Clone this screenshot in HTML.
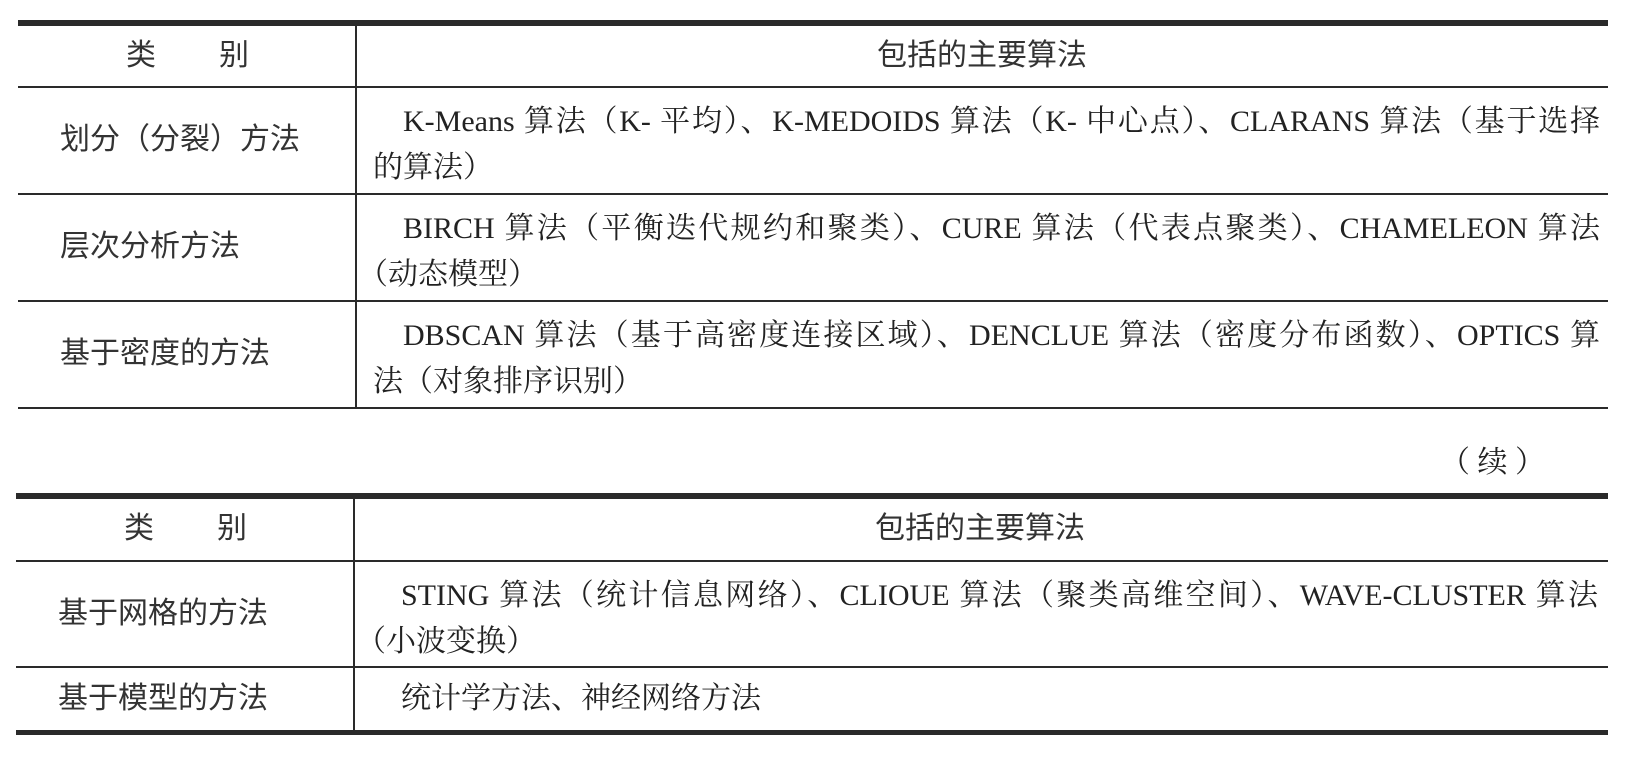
<!DOCTYPE html>
<html><head><meta charset="utf-8"><style>
body{margin:0;width:1631px;height:764px;background:#fff;position:relative;overflow:hidden;color:#222}
.h{position:absolute;background:#2a2a2a}
.t{position:absolute;font-size:30px;line-height:42px;white-space:nowrap}
.s{font-family:"Liberation Sans","Noto Sans CJK SC",sans-serif;color:#333}
.r{font-family:"Liberation Serif","Noto Serif CJK SC",serif}
.j{text-align:justify;text-align-last:justify;white-space:normal;width:1227px}
</style></head><body>
<!-- table 1 -->
<div class="h" style="left:18px;top:20px;width:1590px;height:6px"></div>
<div class="h" style="left:18px;top:86px;width:1590px;height:2px"></div>
<div class="h" style="left:18px;top:193px;width:1590px;height:2px"></div>
<div class="h" style="left:18px;top:300px;width:1590px;height:2px"></div>
<div class="h" style="left:18px;top:407px;width:1590px;height:2px"></div>
<div class="h" style="left:355px;top:20px;width:2px;height:389px"></div>

<div class="t s" style="left:126px;top:35px">类</div>
<div class="t s" style="left:219px;top:35px">别</div>
<div class="t s" style="left:877px;top:35px">包括的主要算法</div>

<div class="t s" style="left:60px;top:119px">划分（分裂）方法</div>
<div class="t r j" style="left:373px;top:101px;text-indent:30px">K-Means 算法（K- 平均）、K-MEDOIDS 算法（K- 中心点）、CLARANS 算法（基于选择</div>
<div class="t r" style="left:373px;top:147px">的算法）</div>

<div class="t s" style="left:60px;top:226px">层次分析方法</div>
<div class="t r j" style="left:373px;top:208px;text-indent:30px">BIRCH 算法（平衡迭代规约和聚类）、CURE 算法（代表点聚类）、CHAMELEON 算法</div>
<div class="t r" style="left:358px;top:254px">（动态模型）</div>

<div class="t s" style="left:60px;top:333px">基于密度的方法</div>
<div class="t r j" style="left:373px;top:315px;text-indent:30px">DBSCAN 算法（基于高密度连接区域）、DENCLUE 算法（密度分布函数）、OPTICS 算</div>
<div class="t r" style="left:373px;top:361px">法（对象排序识别）</div>

<div class="t r" style="left:1440px;top:442px">（ 续 ）</div>

<!-- table 2 -->
<div class="h" style="left:16px;top:493px;width:1592px;height:6px"></div>
<div class="h" style="left:16px;top:560px;width:1592px;height:2px"></div>
<div class="h" style="left:16px;top:666px;width:1592px;height:2px"></div>
<div class="h" style="left:16px;top:730px;width:1592px;height:5px"></div>
<div class="h" style="left:353px;top:493px;width:2px;height:240px"></div>

<div class="t s" style="left:124px;top:508px">类</div>
<div class="t s" style="left:217px;top:508px">别</div>
<div class="t s" style="left:875px;top:508px">包括的主要算法</div>

<div class="t s" style="left:58px;top:593px">基于网格的方法</div>
<div class="t r j" style="left:371px;top:575px;text-indent:30px">STING 算法（统计信息网络）、CLIOUE 算法（聚类高维空间）、WAVE-CLUSTER 算法</div>
<div class="t r" style="left:356px;top:621px">（小波变换）</div>

<div class="t s" style="left:58px;top:678px">基于模型的方法</div>
<div class="t r" style="left:401px;top:678px">统计学方法、神经网络方法</div>
</body></html>
